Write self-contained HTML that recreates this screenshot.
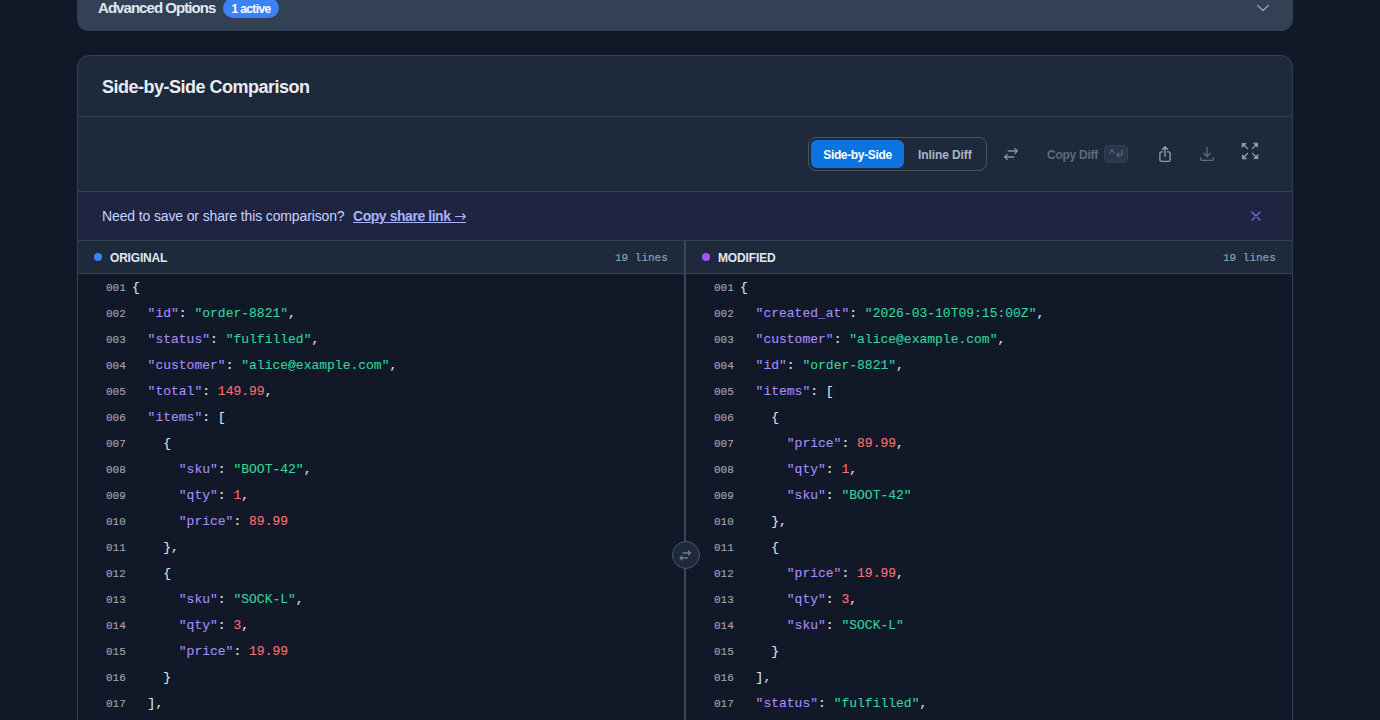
<!DOCTYPE html>
<html><head><meta charset="utf-8">
<style>
*{box-sizing:border-box;margin:0;padding:0}
html,body{width:1380px;height:720px;overflow:hidden;background:#111827;font-family:"Liberation Sans",sans-serif;color:#e5e7eb}
i{font-style:normal}
.abs{position:absolute;white-space:nowrap}
.adv{position:absolute;left:77px;top:-20px;width:1216px;height:51px;background:#334155;border-radius:12px}
.card{position:absolute;left:77px;top:55px;width:1216px;height:720px;background:#1e293b;border:1px solid #334155;border-radius:12px;overflow:hidden}
.hdr{position:absolute;left:0;top:0;width:100%;height:61px;border-bottom:1px solid #334155}
.tb{position:absolute;left:0;top:61px;width:100%;height:75px;border-bottom:1px solid #334155}
.banner{position:absolute;left:0;top:136px;width:100%;height:49px;background:#1f2540;border-bottom:1px solid #334155}
.panes{position:absolute;left:0;top:185px;width:100%;height:600px}
.pane{position:absolute;top:0;width:606px;height:600px}
.ph{position:absolute;left:0;top:0;width:100%;height:33px;background:#1e293b;border-bottom:1px solid #334155}
.code{position:absolute;left:0;top:33px;width:100%;height:560px;background:#111827;padding-top:0}
.divider{position:absolute;left:606px;top:0;width:2px;height:600px;background:#3b4656}
.r{position:relative;height:26px}
.ln{position:absolute;left:28px;top:1px;line-height:26px;font-family:"Liberation Mono",monospace;font-size:11px;color:#9aa5b5;-webkit-text-stroke:0.15px currentColor}
.cl{position:absolute;left:54px;top:1px;line-height:26px;font-family:"Liberation Mono",monospace;font-size:13px;color:#dbe2ea;white-space:pre;-webkit-text-stroke:0.12px currentColor}
.k{color:#a78bfa}.s{color:#34d399}.n{color:#f87171}
</style></head><body>
<div class="adv"></div>
<span class="abs" style="left:98px;top:-1px;font-size:15px;font-weight:bold;color:#e2e8f0;line-height:17px;letter-spacing:-0.95px">Advanced Options</span>
<span class="abs" style="left:223px;top:-2px;width:56px;height:20px;border-radius:10px;background:#3b82f6;color:#fff;font-size:12px;font-weight:bold;line-height:22px;text-align:center;letter-spacing:-0.6px">1 active</span>

<div class="card">
  <div class="hdr"></div>
  <div class="tb"></div>
  <div class="banner"></div>
  <div class="panes">
    <div class="pane" style="left:0">
      <div class="ph"></div>
      <div class="code">
<div class="r"><span class="ln">001</span><span class="cl">{</span></div>
<div class="r"><span class="ln">002</span><span class="cl">  <i class="k">&quot;id&quot;</i>: <i class="s">&quot;order-8821&quot;</i>,</span></div>
<div class="r"><span class="ln">003</span><span class="cl">  <i class="k">&quot;status&quot;</i>: <i class="s">&quot;fulfilled&quot;</i>,</span></div>
<div class="r"><span class="ln">004</span><span class="cl">  <i class="k">&quot;customer&quot;</i>: <i class="s">&quot;alice@example.com&quot;</i>,</span></div>
<div class="r"><span class="ln">005</span><span class="cl">  <i class="k">&quot;total&quot;</i>: <i class="n">149.99</i>,</span></div>
<div class="r"><span class="ln">006</span><span class="cl">  <i class="k">&quot;items&quot;</i>: [</span></div>
<div class="r"><span class="ln">007</span><span class="cl">    {</span></div>
<div class="r"><span class="ln">008</span><span class="cl">      <i class="k">&quot;sku&quot;</i>: <i class="s">&quot;BOOT-42&quot;</i>,</span></div>
<div class="r"><span class="ln">009</span><span class="cl">      <i class="k">&quot;qty&quot;</i>: <i class="n">1</i>,</span></div>
<div class="r"><span class="ln">010</span><span class="cl">      <i class="k">&quot;price&quot;</i>: <i class="n">89.99</i></span></div>
<div class="r"><span class="ln">011</span><span class="cl">    },</span></div>
<div class="r"><span class="ln">012</span><span class="cl">    {</span></div>
<div class="r"><span class="ln">013</span><span class="cl">      <i class="k">&quot;sku&quot;</i>: <i class="s">&quot;SOCK-L&quot;</i>,</span></div>
<div class="r"><span class="ln">014</span><span class="cl">      <i class="k">&quot;qty&quot;</i>: <i class="n">3</i>,</span></div>
<div class="r"><span class="ln">015</span><span class="cl">      <i class="k">&quot;price&quot;</i>: <i class="n">19.99</i></span></div>
<div class="r"><span class="ln">016</span><span class="cl">    }</span></div>
<div class="r"><span class="ln">017</span><span class="cl">  ],</span></div>
<div class="r"><span class="ln">018</span><span class="cl">  <i class="k">&quot;tags&quot;</i>: [<i class="s">&quot;priority&quot;</i>]</span></div>
<div class="r"><span class="ln">019</span><span class="cl">}</span></div>
      </div>
    </div>
    <div class="divider"></div>
    <div class="pane" style="left:608px">
      <div class="ph"></div>
      <div class="code">
<div class="r"><span class="ln">001</span><span class="cl">{</span></div>
<div class="r"><span class="ln">002</span><span class="cl">  <i class="k">&quot;created_at&quot;</i>: <i class="s">&quot;2026-03-10T09:15:00Z&quot;</i>,</span></div>
<div class="r"><span class="ln">003</span><span class="cl">  <i class="k">&quot;customer&quot;</i>: <i class="s">&quot;alice@example.com&quot;</i>,</span></div>
<div class="r"><span class="ln">004</span><span class="cl">  <i class="k">&quot;id&quot;</i>: <i class="s">&quot;order-8821&quot;</i>,</span></div>
<div class="r"><span class="ln">005</span><span class="cl">  <i class="k">&quot;items&quot;</i>: [</span></div>
<div class="r"><span class="ln">006</span><span class="cl">    {</span></div>
<div class="r"><span class="ln">007</span><span class="cl">      <i class="k">&quot;price&quot;</i>: <i class="n">89.99</i>,</span></div>
<div class="r"><span class="ln">008</span><span class="cl">      <i class="k">&quot;qty&quot;</i>: <i class="n">1</i>,</span></div>
<div class="r"><span class="ln">009</span><span class="cl">      <i class="k">&quot;sku&quot;</i>: <i class="s">&quot;BOOT-42&quot;</i></span></div>
<div class="r"><span class="ln">010</span><span class="cl">    },</span></div>
<div class="r"><span class="ln">011</span><span class="cl">    {</span></div>
<div class="r"><span class="ln">012</span><span class="cl">      <i class="k">&quot;price&quot;</i>: <i class="n">19.99</i>,</span></div>
<div class="r"><span class="ln">013</span><span class="cl">      <i class="k">&quot;qty&quot;</i>: <i class="n">3</i>,</span></div>
<div class="r"><span class="ln">014</span><span class="cl">      <i class="k">&quot;sku&quot;</i>: <i class="s">&quot;SOCK-L&quot;</i></span></div>
<div class="r"><span class="ln">015</span><span class="cl">    }</span></div>
<div class="r"><span class="ln">016</span><span class="cl">  ],</span></div>
<div class="r"><span class="ln">017</span><span class="cl">  <i class="k">&quot;status&quot;</i>: <i class="s">&quot;fulfilled&quot;</i>,</span></div>
<div class="r"><span class="ln">018</span><span class="cl">  <i class="k">&quot;total&quot;</i>: <i class="n">149.99</i></span></div>
<div class="r"><span class="ln">019</span><span class="cl">}</span></div>
      </div>
    </div>
  </div>
</div>

<!-- header title -->
<span class="abs" style="left:102px;top:76px;font-size:18px;font-weight:bold;color:#e8edf3;line-height:22px;letter-spacing:-0.5px">Side-by-Side Comparison</span>

<!-- toolbar -->
<div class="abs" style="left:808px;top:137px;width:179px;height:34px;border:1px solid #475569;border-radius:8px"></div>
<div class="abs" style="left:811px;top:140px;width:93px;height:28px;background:#0b74de;border-radius:6px"></div>
<span class="abs" style="left:811px;top:141px;width:93px;text-align:center;font-size:12px;font-weight:bold;color:#fff;line-height:28px;letter-spacing:-0.35px">Side-by-Side</span>
<span class="abs" style="left:918px;top:141px;font-size:12px;font-weight:bold;color:#aab5c4;line-height:28px;letter-spacing:-0.1px">Inline Diff</span>
<span class="abs" style="left:1047px;top:141px;font-size:12px;font-weight:bold;color:#5d6b80;line-height:28px;letter-spacing:-0.25px">Copy Diff</span>
<div class="abs" style="left:1104px;top:145px;width:24px;height:18px;border-radius:4px;background:#2a3649;border:1px solid #334155"></div>

<!-- banner text -->
<span class="abs" style="left:102px;top:208px;font-size:14px;color:#c7d2fe;line-height:17px;letter-spacing:-0.13px">Need to save or share this comparison?</span>
<span class="abs" style="left:353px;top:208px;font-size:14px;font-weight:bold;color:#a5b4fc;line-height:17px;letter-spacing:-0.45px;text-decoration:underline;text-decoration-thickness:1px;text-underline-offset:1px">Copy share link</span>
<div class="abs" style="left:449px;top:222px;width:17px;height:1px;background:#a5b4fc"></div>

<!-- pane headers -->
<span class="abs" style="left:94px;top:253px;width:8px;height:8px;border-radius:50%;background:#3b82f6"></span>
<span class="abs" style="left:110px;top:251px;font-size:12px;font-weight:bold;color:#e2e8f0;line-height:14px;letter-spacing:-0.19px">ORIGINAL</span>
<span class="abs" style="left:615px;top:251px;font-family:'Liberation Mono',monospace;font-size:11px;color:#94a3b8;line-height:14px;-webkit-text-stroke:0.15px currentColor">19 lines</span>
<span class="abs" style="left:702px;top:253px;width:8px;height:8px;border-radius:50%;background:#a855f7"></span>
<span class="abs" style="left:718px;top:251px;font-size:12px;font-weight:bold;color:#e2e8f0;line-height:14px;letter-spacing:-0.14px">MODIFIED</span>
<span class="abs" style="left:1223px;top:251px;font-family:'Liberation Mono',monospace;font-size:11px;color:#94a3b8;line-height:14px;-webkit-text-stroke:0.15px currentColor">19 lines</span>

<svg class="abs" style="left:0;top:0" width="1380" height="720" fill="none" stroke-linecap="round" stroke-linejoin="round">
  <!-- chevron -->
  <path d="M1257.6 5.5 L1263 10.5 L1268.4 5.5" stroke="#94a3b8" stroke-width="1.3"/>
  <!-- swap -->
  <path d="M1008.2 151 H1017.2 M1014.8 148.4 L1017.3 151 L1014.8 153.6 M1004.8 157 H1013.8 M1007.2 154.4 L1004.7 157 L1007.2 159.6" stroke="#8391a7" stroke-width="1.35"/>
  <!-- kbd glyphs -->
  <path d="M1110 153 L1112 149.5 L1114 153" stroke="#5d6b80" stroke-width="1.1"/>
  <path d="M1122 150 V155 H1117 M1119 153 L1117 155 L1119 157" stroke="#5d6b80" stroke-width="1.1"/>
  <!-- share -->
  <path d="M1162.6 151.8 H1161.3 Q1159.9 151.8 1159.9 153.2 V159.9 Q1159.9 161.3 1161.3 161.3 H1168.7 Q1170.1 161.3 1170.1 159.9 V153.2 Q1170.1 151.8 1168.7 151.8 H1167.4" stroke="#8f9db2" stroke-width="1.35"/>
  <path d="M1165 156.3 V147.2 M1162.4 149.4 L1165 146.8 L1167.6 149.4" stroke="#8f9db2" stroke-width="1.35"/>
  <!-- download -->
  <path d="M1200.6 157.6 V158.9 Q1200.6 160.3 1202 160.3 H1212 Q1213.4 160.3 1213.4 158.9 V157.6" stroke="#5f6d82" stroke-width="1.35"/>
  <path d="M1207 147.6 V156.6 M1203.6 153.2 L1207 156.6 L1210.4 153.2" stroke="#5f6d82" stroke-width="1.35"/>
  <!-- expand -->
  <g stroke="#94a3b8" stroke-width="1.3">
    <path d="M1243.5 144.5 L1247.6 148.6 M1256.5 144.5 L1252.4 148.6 M1243.5 157.5 L1247.6 153.4 M1256.5 157.5 L1252.4 153.4"/>
  </g>
  <g fill="#94a3b8" stroke="#94a3b8" stroke-width="0.8">
    <path d="M1242.4 143.4 H1246.2 L1242.4 147.2 Z M1257.6 143.4 V147.2 L1253.8 143.4 Z M1242.4 158.6 V154.8 L1246.2 158.6 Z M1257.6 158.6 H1253.8 L1257.6 154.8 Z"/>
  </g>
  <!-- link arrow -->
  <path d="M455.5 216.5 H465.3 M462.6 213.8 L465.4 216.5 L462.6 219.2" stroke="#a5b4fc" stroke-width="1.2"/>
  <!-- close -->
  <path d="M1252 212 L1260 220 M1260 212 L1252 220" stroke="#6d70f0" stroke-width="1.4"/>
  <!-- handle -->
  <circle cx="686" cy="555" r="13.5" fill="#1e293b" stroke="#475569" stroke-width="1"/>
  <path d="M683 553 H690.5 M688.5 551 L690.5 553 L688.5 555 M680 558 H687.5 M682 556 L680 558 L682 560" stroke="#6b7a90" stroke-width="1.3"/>
</svg>
</body></html>
